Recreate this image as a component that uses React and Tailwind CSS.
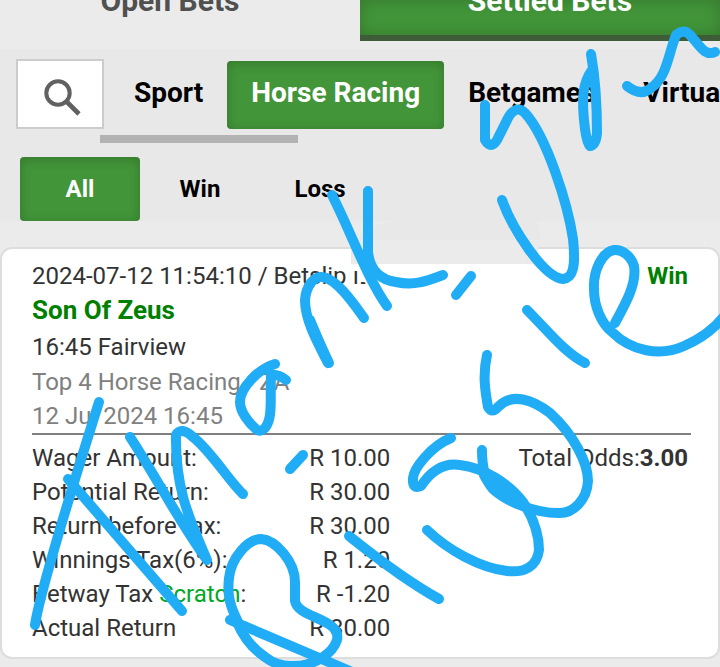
import React from 'react';

const sports = ['Sport', 'Horse Racing', 'Betgames', 'Virtual'];
const results = ['All', 'Win', 'Loss'];

const amounts = [
  { label: 'Wager Amount:', value: 'R 10.00' },
  { label: 'Potential Return:', value: 'R 30.00' },
  { label: 'Return before tax:', value: 'R 30.00' },
  { label: 'Winnings Tax(6%):', value: 'R 1.20' },
  { label: <>Betway Tax <span className="text-[#00a826]">Scratch</span>:</>, value: 'R -1.20' },
  { label: 'Actual Return', value: 'R 30.00' },
];

// freehand pen strokes, one path per stroke
const strokes = [
  'M99 402 C82 456 40 590 35 625',
  'M68 479 L182 611',
  'M130 437 C155 475 178 520 207 560 C190 520 175 490 176 435 Q181 426 193 437 C211 451 229 481 243 494',
  'M275 364 C258 369 240 388 240 402 C240 412 249 423 256 429 Q260 433 265 428 C273 418 270 400 271 375 Q278 374 286 380',
  'M310 320 L328 363 C314 336 305 318 305 300 C306 286 314 276 322 277 C336 278 354 304 364 318',
  'M309 320 L329 363',
  'M332 195 C350 230 367 278 387 306',
  'M368 191 L368 252 C370 272 382 280 396 282 C415 286 427 281 443 275',
  'M471 276 L456 295',
  'M485 105 L485 140 Q491 150 497 140 L508 118 Q516 104 525 113 C547 137 568 205 573 239 C576 267 573 278 563 279 C543 277 512 228 502 200',
  'M591 54 C596 82 597 115 597 133 Q596 145 590 146 Q587 144 585 129 C581 98 583 82 592 70',
  'M627 86 Q641 97 651 88 C667 77 668 55 676 35 Q684 29 689 34 C699 44 704 57 715 52',
  'M487 355 C482 377 486 395 488 407 Q492 414 498 407 C512 392 533 400 550 413 C574 435 588 463 588 481 C587 499 574 514 558 513 C535 513 507 502 493 489 Q482 477 482 450',
  'M451 438 C431 446 414 468 413 478 Q412 490 421 486 C433 468 447 463 460 465 C485 468 509 484 523 502 C534 519 539 537 539 550 C537 566 525 573 507 571 C480 568 448 550 427 530',
  'M484 475 Q492 492 522 505 M500 488 L516 499',
  'M527 310 C548 331 565 353 585 363',
  'M615 323 C626 303 637 283 634 266 C631 256 622 249 614 250 C602 252 593 271 594 289 C594 306 601 323 612 332 C631 351 660 357 684 346 Q710 335 726 314',
  'M303 455 L290 469',
  'M349 536 C379 560 410 583 439 599',
  'M230 620 L350 671',
  'M238 622 C230 606 227 595 229 578 C231 558 248 539 261 539 C276 540 295 562 295 582 L295 601 C297 613 317 616 330 625 Q339 631 337 640 C333 653 315 666 293 666 Q278 667 265 657 Q246 644 237 622',
];

const SearchIcon = () => (
  <svg viewBox="0 0 40 40" className="size-10 text-[#616161]" fill="none" stroke="currentColor">
    <circle cx="15" cy="15" r="11.7" strokeWidth="4" />
    <path d="M23.5 23.5 L36 36" strokeWidth="4.6" />
  </svg>
);

const BetCard = () => (
  <section className="rounded-xl border-2 border-[#dddddd] bg-white px-[30px] pt-2.5 pb-3 text-2xl leading-[34px] text-[#333333]">
    <div className="flex justify-between">
      <span>2024-07-12 11:54:10 / Betslip ID</span>
      <b className="text-[#008000]">Win</b>
    </div>
    <h2 className="text-[26px] font-bold text-[#008000]">Son Of Zeus</h2>
    <p className="pt-[3px]">16:45 Fairview</p>
    <div className="-mr-[3px] border-b-2 border-[#808080] pt-px text-[#808080]">
      <p>Top 4 Horse Racing - ZA</p>
      <p>12 Jul 2024 16:45</p>
    </div>
    <div className="flex items-start justify-between pt-1.5">
      <table>
        <tbody>
          {amounts.map((row, i) => (
            <tr key={i} className="h-[34px]">
              <th scope="row" className="w-[214px] p-0 text-left font-normal whitespace-nowrap">{row.label}</th>
              <td className="w-36 p-0 text-right whitespace-nowrap">{row.value}</td>
            </tr>
          ))}
        </tbody>
      </table>
      <p>Total Odds:<b>3.00</b></p>
    </div>
  </section>
);

const App = () => {
  return (
    <div className="relative min-h-screen overflow-hidden bg-[#ebebeb] font-['Roboto',sans-serif]">
      <nav className="flex h-[41px] text-[30px] leading-8 font-bold">
        <button className="flex flex-1 items-end justify-center pr-5 pb-6 text-[#505050]">Open Bets</button>
        <button className="flex flex-1 items-end justify-center border-b-6 border-[#3d5c37] bg-[#429539] pr-0 pb-[18px] pl-5 text-white shadow-[inset_0_0_16px_rgba(0,0,0,0.2)]">Settled Bets</button>
      </nav>

      <div className="mt-2 bg-[#e8e8e8] pt-2.5">
        <div className="flex items-start">
          <button aria-label="Search" className="ml-4 flex h-[70px] w-[88px] shrink-0 items-center justify-center border-2 border-[#cccccc] bg-white pt-2 pl-1.5">
            <SearchIcon />
          </button>
          <div className="ml-1.5 flex flex-1 overflow-hidden pt-0.5">
            {sports.map((name) => (
              <button
                key={name}
                className={
                  name === 'Horse Racing'
                    ? 'h-[68px] shrink-0 rounded bg-[#429539] px-6 pb-1 text-[28px] font-bold text-white shadow-[inset_0_2px_12px_rgba(0,0,0,0.2)]'
                    : 'h-[68px] shrink-0 px-6 pb-1 text-[28px] font-bold text-black'
                }
              >
                {name}
              </button>
            ))}
          </div>
        </div>
        <div className="mt-1.5 ml-[100px] h-2 w-[198px] bg-[#b3b3b3]" />
        <div className="mt-3.5 flex pl-5">
          {results.map((name) => (
            <button
              key={name}
              className={
                name === 'All'
                  ? 'h-16 w-[120px] rounded bg-[#429539] text-2xl font-bold text-white shadow-[inset_0_2px_12px_rgba(0,0,0,0.2)]'
                  : 'h-16 w-[120px] text-2xl font-bold text-black'
              }
            >
              {name}
            </button>
          ))}
        </div>
      </div>

      <main className="pt-[26px] pb-2">
        <BetCard />
      </main>

      {/* pen layer: cover-up smudge and handwriting */}
      <svg className="pointer-events-none absolute top-0 left-0" width="720" height="667" viewBox="0 0 720 667" fill="none">
        <path d="M351 240 H538 V264 H351 Z" fill="#ebebeb" />
        <path d="M359 240 Q359 227 395 221 H536 Q540 230 540 240 Z" fill="#e8e8e8" />
        <path d="M351 264 H390 V290 H367 L365 282 H358 V271 H351 Z" fill="#ffffff" />
        <g stroke="#21acf6" strokeWidth="10" strokeLinecap="round" strokeLinejoin="round">
          {strokes.map((d) => (
            <path key={d} d={d} />
          ))}
        </g>
      </svg>
    </div>
  );
};

export default App;
